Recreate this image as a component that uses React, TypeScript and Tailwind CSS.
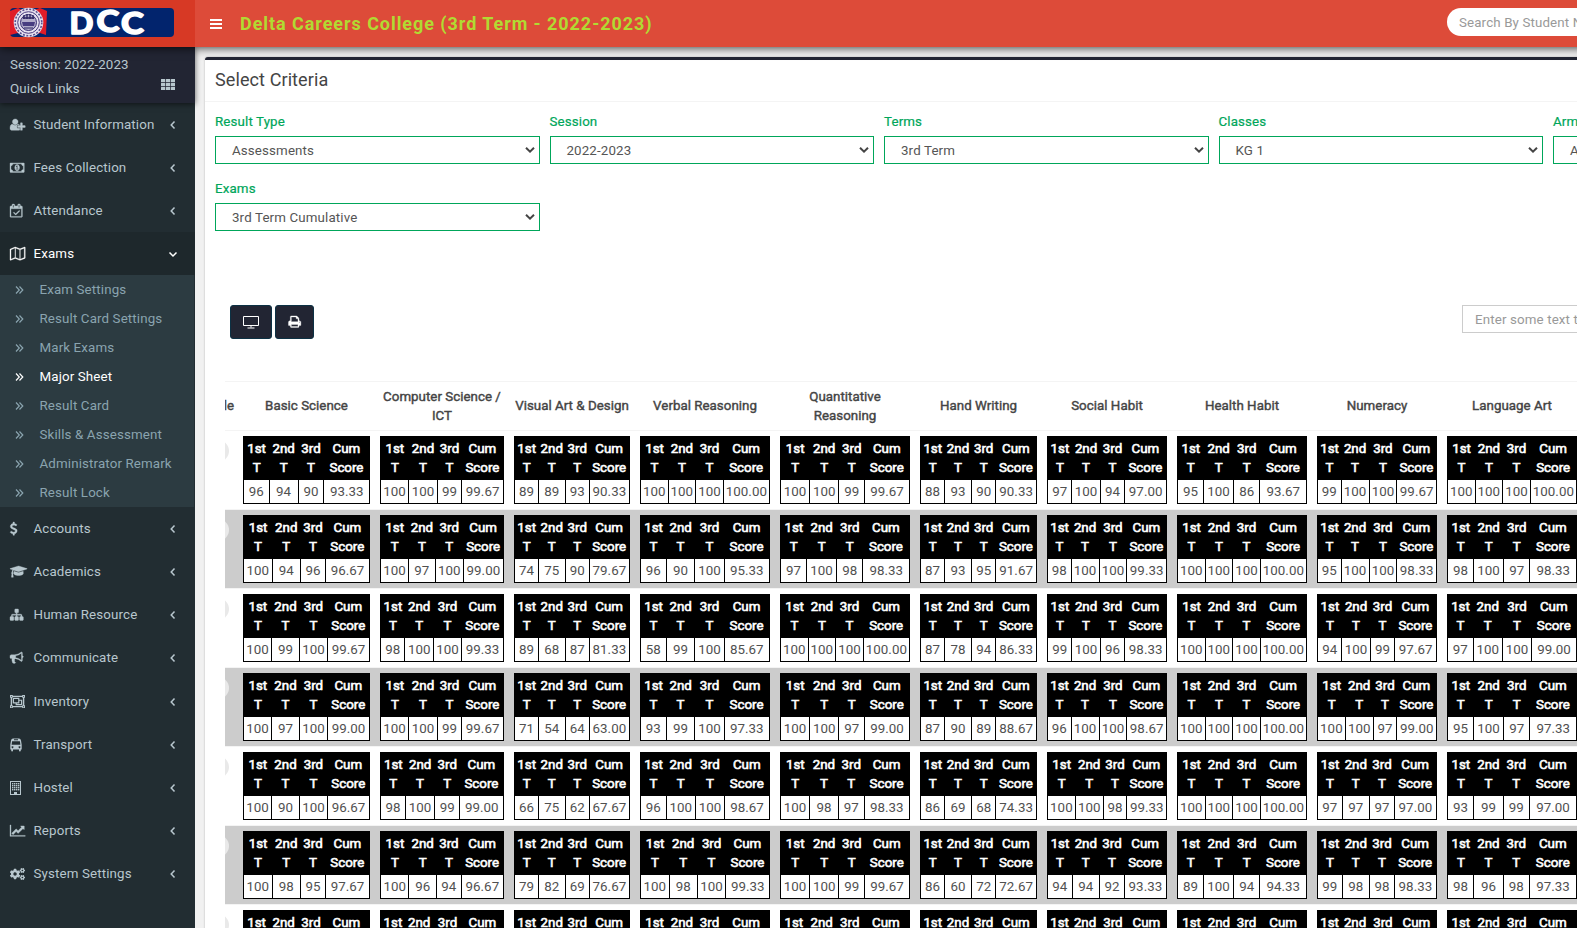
import type { ReactNode } from 'react'
import { FaCogs, FaRegObjectGroup } from 'react-icons/fa'

type Score = [string, string, string, string]

const headings: { label: string; width: number }[] = [
  { label: 'Basic Science', width: 137 },
  { label: 'Computer Science / ICT', width: 134 },
  { label: 'Visual Art & Design', width: 126 },
  { label: 'Verbal Reasoning', width: 140 },
  { label: 'Quantitative Reasoning', width: 140 },
  { label: 'Hand Writing', width: 127 },
  { label: 'Social Habit', width: 130 },
  { label: 'Health Habit', width: 140 },
  { label: 'Numeracy', width: 130 },
  { label: 'Language Art', width: 140 },
]

const data = `96 94 90 93.33|100 100 99 99.67|89 89 93 90.33|100 100 100 100.00|100 100 99 99.67|88 93 90 90.33|97 100 94 97.00|95 100 86 93.67|99 100 100 99.67|100 100 100 100.00
100 94 96 96.67|100 97 100 99.00|74 75 90 79.67|96 90 100 95.33|97 100 98 98.33|87 93 95 91.67|98 100 100 99.33|100 100 100 100.00|95 100 100 98.33|98 100 97 98.33
100 99 100 99.67|98 100 100 99.33|89 68 87 81.33|58 99 100 85.67|100 100 100 100.00|87 78 94 86.33|99 100 96 98.33|100 100 100 100.00|94 100 99 97.67|97 100 100 99.00
100 97 100 99.00|100 100 99 99.67|71 54 64 63.00|93 99 100 97.33|100 100 97 99.00|87 90 89 88.67|96 100 100 98.67|100 100 100 100.00|100 100 97 99.00|95 100 97 97.33
100 90 100 96.67|98 100 99 99.00|66 75 62 67.67|96 100 100 98.67|100 98 97 98.33|86 69 68 74.33|100 100 98 99.33|100 100 100 100.00|97 97 97 97.00|93 99 99 97.00
100 98 95 97.67|100 96 94 96.67|79 82 69 76.67|100 98 100 99.33|100 100 99 99.67|86 60 72 72.67|94 94 92 93.33|89 100 94 94.33|99 98 98 98.33|98 96 98 97.33
96 94 90 93.33|98 100 100 99.33|89 89 93 90.33|100 100 100 100.00|97 100 98 98.33|88 93 90 90.33|98 100 100 99.33|100 100 100 100.00|99 100 100 99.67|98 100 97 98.33`
const rows: Score[][] = data.split('\n').map((r) => r.split('|').map((c) => c.split(' ') as Score))

function Glyph({ w, d }: { w: number; d: string }) {
  return (
    <svg viewBox={`0 0 ${w} 1792`} className="h-[13.33px] w-auto shrink-0 overflow-visible fill-current stroke-current stroke-[45]">
      <path d={d} />
    </svg>
  )
}

const userPlus = 'M704 896q-159 0-271.5-112.5t-112.5-271.5 112.5-271.5 271.5-112.5 271.5 112.5 112.5 271.5-112.5 271.5-271.5 112.5zm960 128h352q13 0 22.5 9.5t9.5 22.5v192q0 13-9.5 22.5t-22.5 9.5h-352v352q0 13-9.5 22.5t-22.5 9.5h-192q-13 0-22.5-9.5t-9.5-22.5v-352h-352q-13 0-22.5-9.5t-9.5-22.5v-192q0-13 9.5-22.5t22.5-9.5h352v-352q0-13 9.5-22.5t22.5-9.5h192q13 0 22.5 9.5t9.5 22.5v352zm-736 224q0 52 38 90t90 38h256v238q-68 50-171 50h-874q-121 0-194-69t-73-190q0-53 3.5-103.5t14-109 26.5-108.5 43-97.5 62-81 85.5-53.5 111.5-20q19 0 39 17 79 61 154.5 91.5t164.5 30.5 164.5-30.5 154.5-91.5q20-17 39-17 132 0 217 96h-223q-52 0-90 38t-38 90v192z'
const money = 'M768 1152h384v-96h-128v-448h-114l-148 137 77 80q42-37 55-57h2v288h-128v96zm512-256q0 70-21 142t-59.5 134-101.5 101-138 39-138-39-101.5-101-59.5-134-21-142 21-142 59.5-134 101.5-101 138-39 138 39 101.5 101 59.5 134 21 142zm512 256v-512q-106 0-181-75t-75-181h-1152q0 106-75 181t-181 75v512q106 0 181 75t75 181h1152q0-106 75-181t181-75zm128-832v1152q0 26-19 45t-45 19h-1792q-26 0-45-19t-19-45v-1152q0-26 19-45t45-19h1792q26 0 45 19t19 45z'
const calendar = 'M1303 964l-512 512q-10 9-23 9t-23-9l-288-288q-9-10-9-23t9-22l46-46q9-9 22-9t23 9l220 220 444-444q10-9 23-9t22 9l46 46q9 9 9 22t-9 23zm-1175 700h1408v-1024h-1408v1024zm384-1216v-288q0-14-9-23t-23-9h-64q-14 0-23 9t-9 23v288q0 14 9 23t23 9h64q14 0 23-9t9-23zm768 0v-288q0-14-9-23t-23-9h-64q-14 0-23 9t-9 23v288q0 14 9 23t23 9h64q14 0 23-9t9-23zm384-64v1280q0 52-38 90t-90 38h-1408q-52 0-90-38t-38-90v-1280q0-52 38-90t90-38h128v-96q0-66 47-113t113-47h64q66 0 113 47t47 113v96h384v-96q0-66 47-113t113-47h64q66 0 113 47t47 113v96h128q52 0 90 38t38 90z'
const map = 'M2020 11q28 20 28 53v1408q0 20-11 36t-29 23l-640 256q-24 11-48 0l-616-246-616 246q-10 5-24 5-19 0-36-11-28-20-28-53v-1408q0-20 11-36t29-23l640-256q24-11 48 0l616 246 616-246q32-13 60 6zm-1284 135v1270l576 230v-1270zm-608 217v1270l544-217v-1270zm1792 1066v-1270l-544 217v1270z'
const usd = 'M1362 1185q0 153-99.5 263.5t-258.5 136.5v175q0 14-9 23t-23 9h-135q-13 0-22.5-9.5t-9.5-22.5v-175q-66-9-127.5-31t-101.5-44.5-74-48-46.5-37.5-17.5-18q-17-21-2-41l103-135q7-10 23-12 15-2 24 9l2 2q113 99 243 125 37 8 74 8 81 0 142.5-43t61.5-122q0-28-15-53t-33.5-42-58.5-37.5-66-32-80-32.5q-39-16-61.5-25t-61.5-26.5-62.5-31-56.5-35.5-53.5-42.5-43.5-49-35.5-58-21-66.5-8.5-78q0-138 98-242t255-134v-180q0-13 9.5-22.5t22.5-9.5h135q14 0 23 9t9 23v176q57 6 110.5 23t87 33.5 63.5 37.5 39 29 15 14q17 18 5 38l-81 146q-8 15-23 16-14 3-27-7-3-3-14.5-12t-39-26.5-58.5-32-74.5-26-85.5-11.5q-95 0-155 43t-60 111q0 26 8.5 48t29.5 41.5 39.5 33 56 31 60.5 27 70 27.5q53 20 81 31.5t76 35 75.5 42.5 62 50 53 63.5 31.5 76.5 13 94z'
const cap = 'M1774 836l18 316q4 69-82 128t-235 93.5-323 34.5-323-34.5-235-93.5-82-128l18-316 574 181q22 7 48 7t48-7zm530-324q0 23-22 31l-1120 352q-4 1-10 1t-10-1l-652-206q-43 34-71 111.5t-34 178.5q63 36 63 109 0 69-58 107l58 433q2 14-8 25-9 11-24 11h-192q-15 0-24-11-10-11-8-25l58-433q-58-38-58-107 0-73 65-111 11-207 98-330l-333-104q-22-8-22-31t22-31l1120-352q4-1 10-1t10 1l1120 352q22 8 22 31z'
const sitemap = 'M1792 1248v320q0 40-28 68t-68 28h-320q-40 0-68-28t-28-68v-320q0-40 28-68t68-28h96v-192h-512v192h96q40 0 68 28t28 68v320q0 40-28 68t-68 28h-320q-40 0-68-28t-28-68v-320q0-40 28-68t68-28h96v-192h-512v192h96q40 0 68 28t28 68v320q0 40-28 68t-68 28h-320q-40 0-68-28t-28-68v-320q0-40 28-68t68-28h96v-192q0-52 38-90t90-38h512v-192h-96q-40 0-68-28t-28-68v-320q0-40 28-68t68-28h320q40 0 68 28t28 68v320q0 40-28 68t-68 28h-96v192h512q52 0 90 38t38 90v192h96q40 0 68 28t28 68z'
const bullhorn = 'M1664 640q53 0 90.5 37.5t37.5 90.5-37.5 90.5-90.5 37.5v384q0 52-38 90t-90 38q-417-347-812-380-58 19-91 66t-31 100.5 40 92.5q-20 33-23 65.5t6 58 33.5 55 48 50 61.5 50.5q-29 58-111.5 83t-168.5 11.5-132-55.5q-7-23-29.5-87.5t-32-94.5-23-89-15-101 3.5-98.5 22-110.5h-122q-66 0-113-47t-47-113v-192q0-66 47-113t113-47h480q435 0 896-384 52 0 90 38t38 90v384zm-128 604v-954q-394 302-768 343v270q377 42 768 341z'
const chart = 'M2048 1536v128h-2048v-1536h128v1408h1920zm-128-1248v435q0 21-19.5 29.5t-35.5-7.5l-121-121-633 633q-10 10-23 10t-23-10l-233-233-416 416-192-192 585-585q10-10 23-10t23 10l233 233 464-464-121-121q-16-16-7.5-35.5t29.5-19.5h435q14 0 23 9t9 23z'
const print = 'M448 1536h896v-256h-896v256zm0-640h896v-384h-160q-40 0-68-28t-28-68v-160h-640v640zm1152 64q0-26-19-45t-45-19-45 19-19 45 19 45 45 19 45-19 19-45zm128 0v416q0 13-9.5 22.5t-22.5 9.5h-224v160q0 40-28 68t-68 28h-960q-40 0-68-28t-28-68v-160h-224q-13 0-22.5-9.5t-9.5-22.5v-416q0-79 56.5-135.5t135.5-56.5h64v-544q0-40 28-68t68-28h672q40 0 88 20t76 48l152 152q28 28 48 76t20 88v256h64q79 0 135.5 56.5t56.5 135.5z'

const bus = (
  <svg viewBox="0 0 12 14" className="h-[14px] w-[12px] fill-current">
    <path
      fillRule="evenodd"
      d="M3 .5h6q1.600.2 2 2l.7 4.300v4.700h-.9v1q0 1-.9 1t-.9-1v-1H3v1q0 1-.9 1t-.9-1v-1H.3V6.800L1 2.500q.4-1.800 2-2zM4 1.300v.9h4v-.9zM2.100 3.200 1.600 6.800h8.800l-.5-3.600zM2.500 8.300a.9.9 0 1 0 .01 0zM9.500 8.300a.9.9 0 1 0 .01 0z"
    />
  </svg>
)
const building = (
  <svg viewBox="0 0 11 14" className="h-[14px] w-[11px] fill-current">
    <path fillRule="evenodd" d="M0 0h11v14H0zM1 1v12h3v-2h3v2h3V1z" />
    {[2, 4, 6, 8].map((y) =>
      [2, 4, 6, 8].map((x) => <rect key={`${x}-${y}`} x={x} y={y} width="1.4" height="1.4" />),
    )}
  </svg>
)

const menuTop: [string, ReactNode][] = [
  ['Student Information', <Glyph w={2048} d={userPlus} />],
  ['Fees Collection', <Glyph w={1920} d={money} />],
  ['Attendance', <Glyph w={1664} d={calendar} />],
]
const submenu = ['Exam Settings', 'Result Card Settings', 'Mark Exams', 'Major Sheet', 'Result Card', 'Skills & Assessment', 'Administrator Remark', 'Result Lock']
const menuBottom: [string, ReactNode][] = [
  ['Accounts', <span className="-ml-[3px] flex"><Glyph w={1792} d={usd} /></span>],
  ['Academics', <Glyph w={2304} d={cap} />],
  ['Human Resource', <Glyph w={1792} d={sitemap} />],
  ['Communicate', <Glyph w={1792} d={bullhorn} />],
  ['Inventory', <FaRegObjectGroup className="h-[15px] w-[15px]" />],
  ['Transport', bus],
  ['Hostel', building],
  ['Reports', <Glyph w={2048} d={chart} />],
  ['System Settings', <FaCogs className="h-[14px] w-[15px]" />],
]

function Chevron({ down = false }: { down?: boolean }) {
  return (
    <svg viewBox="0 0 10 10" className="h-[10px] w-[10px] fill-none stroke-current stroke-[1.5]">
      <path d={down ? 'M1.500 3.500 5 7 8.500 3.500' : 'M6.500 1.500 3.200 5 6.500 8.500'} />
    </svg>
  )
}

function MenuItem({ label, icon, active = false }: { label: string; icon: ReactNode; active?: boolean }) {
  const height = label === 'Inventory' ? 'h-[44px] pt-px' : 'h-[43px]'
  return (
    <div className={`flex shrink-0 items-center pl-[10px] pr-[17px] ${height} ${active ? 'bg-[#1e282c] text-white' : 'text-[#b8c7ce]'}`}>
      <span className="flex w-[23.5px] shrink-0 items-center">{icon}</span>
      <span className="flex-1 whitespace-nowrap">{label}</span>
      <Chevron down={active} />
    </div>
  )
}

function Select({ label, value }: { label: string; value: string }) {
  return (
    <div className="flex flex-col">
      <span className="h-[24px] leading-[19px] text-[#00a65a] [-webkit-text-stroke:0.2px_#00a65a]">{label}</span>
      <div className="flex h-[28px] items-center justify-between border border-[#00a65a] pl-4 pr-[4px] text-[#555]">
        <span>{value}</span>
        <svg viewBox="0 0 10 6" className="h-[6px] w-[10px] fill-none stroke-[#444] stroke-2">
          <path d="M1 .8 5 4.600 9 .8" />
        </svg>
      </div>
    </div>
  )
}

function ScoreTable({ score }: { score: Score }) {
  return (
    <table className="w-full border-collapse border border-black bg-white text-center tracking-[0.02px]">
      <thead className="bg-black text-white">
        <tr>
          {['1st T', '2nd T', '3rd T', 'Cum Score'].map((h) => (
            <th key={h} className="h-[43px] px-[2px] py-0 font-normal leading-[19px] tracking-normal [-webkit-text-stroke:0.6px_#fff]">
              {h.split(' ')[0]} {h.split(' ')[1]}
            </th>
          ))}
        </tr>
      </thead>
      <tbody>
        <tr>
          {score.map((s, i) => (
            <td key={i} className="h-[24px] border border-black px-[2px] py-0 leading-[19px] text-[#505050]">{s}</td>
          ))}
        </tr>
      </tbody>
    </table>
  )
}

export default function App() {
  return (
    <div className="flex h-[928px] w-[1577px] flex-col overflow-hidden bg-[#f1f1f1] font-[Roboto,sans-serif] text-[13.33px] leading-[19px] tracking-[0.13px] text-[#444]">
      <header className="relative z-10 flex h-[47px] w-[1620px] shrink-0 bg-[#dd4b39] shadow-[0_1px_9px_rgba(0,0,0,0.75)]">
        <div className="flex w-[195px] items-start bg-[#d73925] pl-[10px] pt-2">
          <svg viewBox="0 0 164 29" className="h-[29px] w-[164px] overflow-visible">
            <rect width="164" height="29" rx="4" fill="#02246d" />
            <path d="M0 3 8 0 14 3 14 27 8 25 0 27z" fill="#e01c28" />
            <path d="M24 2 30 0 37 3 36 27 30 25 24 27z" fill="#e01c28" />
            <circle cx="18.500" cy="14.500" r="14.800" fill="#e6e1ef" />
            <circle cx="18.500" cy="14.500" r="13.300" fill="none" stroke="#5d5090" strokeWidth="1.600" strokeDasharray="2 1.500" />
            <circle cx="18.500" cy="14.500" r="10.800" fill="none" stroke="#4b3c80" />
            <circle cx="18.500" cy="14.500" r="8" fill="#b3adca" stroke="#372d72" />
            <path d="M13 10h11M14 7v4M17 6v5M20 6v5M23 7v4" stroke="#2b2463" fill="none" strokeWidth="1.300" />
            <path d="M12 14h13l-1 4h-11z" fill="#483d80" />
            <path d="M14 20h9" stroke="#2b2463" />
            <g fill="#fff" stroke="#fff" strokeWidth="1.400" strokeLinejoin="round" fontFamily="Lato, sans-serif" fontWeight="900" fontSize="30">
              <text x="59.500" y="25.500" textLength="24" lengthAdjust="spacingAndGlyphs">D</text>
              <text x="86.500" y="23.500" textLength="23" lengthAdjust="spacingAndGlyphs">C</text>
              <text x="111" y="26" textLength="23" lengthAdjust="spacingAndGlyphs">C</text>
            </g>
          </svg>
        </div>
        <div className="flex flex-1 items-center">
          <svg viewBox="0 0 12 10" className="ml-[15px] h-[10px] w-[12px] fill-white">
            <path d="M0 0h12v2H0zM0 4h12v2H0zM0 8h12v2H0z" />
          </svg>
          <h1 className="ml-[18px] whitespace-nowrap text-[18px] font-bold leading-6 tracking-[0.94px] text-[#b1da32]">Delta Careers College (3rd Term - 2022-2023)</h1>
          <div className="-mr-[57px] -mt-[3px] ml-auto flex h-[28px] w-[230px] items-center rounded-full bg-white pl-3 whitespace-nowrap text-[#999]">Search By Student Name</div>
        </div>
      </header>
      <div className="flex min-h-0 flex-1">
        <aside className="flex w-[195px] shrink-0 flex-col bg-[#222d32]">
          <div className="h-[56px] shrink-0 bg-[#222533] px-[10px] pt-2 text-[#b8c7ce] shadow-[0_1px_6px_rgba(0,0,0,0.6)]">
            <div className="tracking-[0.08px]">Session: 2022-2023</div>
            <div className="mt-[5px] flex items-start justify-between pr-[10px]">
              <span>Quick Links</span>
              <svg viewBox="0 0 14 11" className="h-[11px] w-[14px] fill-current">
                {[0, 4, 8].map((y) => [0, 5, 10].map((x) => <rect key={`${x}${y}`} x={x} y={y} width="4.300" height="3.300" rx=".3" />))}
              </svg>
            </div>
          </div>
          {menuTop.map(([l, i]) => <MenuItem key={l} label={l} icon={i} />)}
          <MenuItem label="Exams" icon={<Glyph w={2048} d={map} />} active />
          <div className="mr-px flex flex-col bg-[#2c3b41]">
            {submenu.map((s) => (
              <div key={s} className={`flex h-[29px] items-center pl-[15px] whitespace-nowrap ${s === 'Major Sheet' ? 'text-white' : 'text-[#8aa4af]'}`}>
                <svg viewBox="0 0 9 8" className="mr-[15.5px] h-[8px] w-[9px] fill-none stroke-current stroke-[1.2]">
                  <path d="M1 .5 4.300 4 1 7.500M4.500.5 7.800 4 4.500 7.500" />
                </svg>
                {s}
              </div>
            ))}
          </div>
          {menuBottom.map(([l, i]) => <MenuItem key={l} label={l} icon={i} />)}
        </aside>
        <main className="min-w-0 flex-1 overflow-hidden pl-[10px] pt-[10px]">
          <section className="h-[900px] w-[1700px] rounded-[3px] border-t-[3px] border-[#222533] bg-white shadow-[0_0_2px_rgba(0,0,0,0.3)]">
            <div className="flex h-[42px] items-center border-b border-[#f4f4f4] pl-[10px] pb-[2px] text-[18px] tracking-[0.1px]">Select Criteria</div>
            <div className="grid grid-cols-[repeat(5,324.500px)] gap-x-[10px] gap-y-[15px] px-[10px] pt-[10px]">
              <Select label="Result Type" value="Assessments" />
              <Select label="Session" value="2022-2023" />
              <Select label="Terms" value="3rd Term" />
              <Select label="Classes" value="KG 1" />
              <Select label="Arm" value="A" />
              <Select label="Exams" value="3rd Term Cumulative" />
            </div>
            <div className="mt-[74px] flex items-start pl-[25px] text-white">
              <div className="flex h-[34px] w-[42px] items-center justify-center rounded-[3px] border border-[#0c3144] bg-[#222533]">
                <svg viewBox="0 0 16 13" className="h-[13px] w-[16px] fill-none stroke-white">
                  <path d="M.5.5h15v9H.5zM8 9.500v2M4.500 12h7" />
                </svg>
              </div>
              <div className="ml-[3px] flex h-[34px] w-[39px] items-center justify-center rounded-[3px] border border-[#0c3144] bg-[#222533]">
                <Glyph w={1792} d={print} />
              </div>
              <div className="ml-[1148px] flex h-[28px] w-[240px] items-center border border-[#ccc] pl-3 whitespace-nowrap text-[#999]">Enter some text to filter</div>
            </div>
            <div className="ml-5 mt-[42px] overflow-hidden">
              <div className="flex h-[50px] w-[1400px] items-center border-y border-[#f4f4f4] pb-px text-center tracking-[0.02px] text-[#444] [-webkit-text-stroke:0.4px_#444]">
                <div className="w-[13px] shrink-0 text-right">
                  <span className="float-right pr-[4px]">le</span>
                </div>
                {headings.map((h) => (
                  <div key={h.label} style={{ width: h.width }} className="shrink-0 px-1">{h.label}</div>
                ))}
              </div>
              {rows.map((row, r) => (
                <div key={r} className={`flex h-[79px] w-[1400px] border-b border-[#f4f4f4] ${r % 2 ? 'bg-[#ccc]' : 'bg-white'}`}>
                  <div className="w-[13px] shrink-0 overflow-hidden pt-[9px]">
                    <div className="-ml-[42px] h-[22px] w-[46px] rounded-full bg-[#e9e9e9]" />
                  </div>
                  {row.map((s, i) => (
                    <div key={i} style={{ width: headings[i].width }} className="shrink-0 p-[5px]">
                      <ScoreTable score={s} />
                    </div>
                  ))}
                </div>
              ))}
            </div>
          </section>
        </main>
      </div>
    </div>
  )
}
